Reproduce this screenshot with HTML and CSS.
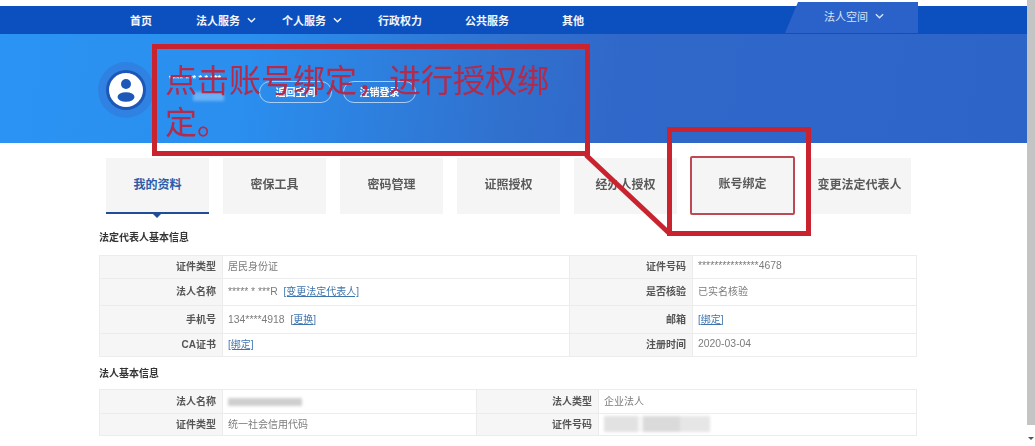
FILE: index.html
```html
<!DOCTYPE html>
<html lang="zh-CN">
<head>
<meta charset="utf-8">
<title>法人空间</title>
<link rel="stylesheet" href="styles.css">
</head>
<body>
<div class="page">
  <div class="main">
    <div class="top-strip"></div>
    <nav class="nav">
      <a class="nav-item nav-home">首页</a>
      <a class="nav-item nav-legal">法人服务<svg class="chev" viewBox="0 0 10 6"><path d="M1 1l4 4 4-4"/></svg></a>
      <a class="nav-item nav-person">个人服务<svg class="chev" viewBox="0 0 10 6"><path d="M1 1l4 4 4-4"/></svg></a>
      <a class="nav-item nav-admin">行政权力</a>
      <a class="nav-item nav-public">公共服务</a>
      <a class="nav-item nav-other">其他</a>
      <a class="nav-space">法人空间<svg class="chev" viewBox="0 0 10 6"><path d="M1 1l4 4 4-4"/></svg></a>
    </nav>
    <header class="hero">
      <svg class="avatar" viewBox="0 0 56 56">
        <circle cx="28" cy="28" r="28" fill="#2f82e2"/>
        <circle cx="28" cy="28" r="20" fill="#1d57b8"/>
        <circle cx="28" cy="28" r="17" fill="#fff"/>
        <circle cx="28" cy="22" r="5" fill="#1d57b8"/>
        <ellipse cx="28" cy="35" rx="8.5" ry="4.8" fill="#1d57b8"/>
      </svg>
      <div class="who">
        <div class="who-name">**** *** * * ***</div>
        <div class="who-blur"></div>
      </div>
      <a class="hero-btn">返回空间</a>
      <a class="hero-btn">注销登录</a>
    </header>
    <div class="tabs">
      <a class="tab tab-active">我的资料</a>
      <a class="tab">密保工具</a>
      <a class="tab">密码管理</a>
      <a class="tab">证照授权</a>
      <a class="tab">经办人授权</a>
      <a class="tab tab-marked">账号绑定</a>
      <a class="tab">变更法定代表人</a>
    </div>
    <section class="content">
      <h2 class="sec-title sec-first">法定代表人基本信息</h2>
      <table class="info info-a">
        <colgroup><col class="c-label"><col class="c-a2"><col class="c-a3"><col></colgroup>
        <tr class="h23"><th>证件类型</th><td>居民身份证</td><th>证件号码</th><td class="num">***************4678</td></tr>
        <tr class="h27"><th>法人名称</th><td><span class="num">***** * ***R</span> <a class="lnk">[变更法定代表人]</a></td><th>是否核验</th><td>已实名核验</td></tr>
        <tr class="h28"><th>手机号</th><td><span class="num">134****4918</span> <a class="lnk">[更换]</a></td><th>邮箱</th><td><a class="lnk">[绑定]</a></td></tr>
        <tr class="h23"><th>CA证书</th><td><a class="lnk">[绑定]</a></td><th>注册时间</th><td class="num">2020-03-04</td></tr>
      </table>
      <h2 class="sec-title sec-second">法人基本信息</h2>
      <table class="info info-b">
        <colgroup><col class="c-label"><col class="c-b2"><col class="c-b3"><col></colgroup>
        <tr class="h24"><th>法人名称</th><td><span class="smear smear-name"></span></td><th>法人类型</th><td>企业法人</td></tr>
        <tr class="h22"><th>证件类型</th><td>统一社会信用代码</td><th>证件号码</th><td><span class="smear smear-id"></span></td></tr>
      </table>
    </section>
  </div>
  <div class="scrollbar"><span class="scroll-track"></span><span class="scroll-arrow"></span></div>

  <div class="note">点击账号绑定，进行授权绑定。</div>
  <div class="mark-box"></div>
  <svg class="connector" viewBox="0 0 90 84"><path d="M2 2L86 81"/></svg>
</div>
</body>
</html>
```

FILE: styles.css
```css
* { box-sizing: border-box; }
html, body { margin: 0; padding: 0; background: #fff; }
body {
  width: 1035px;
  height: 446px;
  overflow: hidden;
  font-family: "Liberation Sans", "Noto Sans CJK SC", sans-serif;
}
.page {
  position: relative;
  display: flex;
  width: 1035px;
  height: 446px;
  overflow: hidden;
  filter: blur(0.45px);
}
.main { width: 1027px; flex: none; }
.top-strip { height: 6px; background: #fff; }

/* nav */
.nav {
  display: flex;
  align-items: center;
  height: 28px;
  background: #0c50bf;
  color: #f2f6fd;
  font-size: 11px;
  font-weight: 700;
  padding-left: 130px;
}
.nav-item { display: flex; align-items: center; white-space: nowrap; }
.nav-legal { margin-left: 44px; }
.nav-person { margin-left: 26px; }
.nav-admin { margin-left: 36px; }
.nav-public { margin-left: 43px; }
.nav-other { margin-left: 53px; }
.chev {
  width: 9px;
  height: 6px;
  margin-left: 7px;
  fill: none;
  stroke: currentColor;
  stroke-width: 1.6;
}
.nav-space {
  display: flex;
  align-items: center;
  align-self: flex-start;
  margin: -4px 0 0 201px;
  width: 133px;
  height: 31px;
  padding: 0 0 3px 39px;
  background: #2b62c9;
  color: #d5e2f8;
  font-weight: 400;
  clip-path: polygon(13px 0, 100% 0, 100% 100%, 0 100%);
}

/* hero */
.hero {
  display: flex;
  align-items: center;
  height: 109px;
  padding-left: 98px;
  background: linear-gradient(98deg, #2a93f3 0%, #2a8fef 24%, #3170cd 50%, #3068ca 60%, #2d64c8 100%);
}
.avatar { width: 56px; height: 56px; flex: none; margin-top: 2px; }
.who { width: 90px; margin: 0 0 0 15px; padding-bottom: 4px; }
.who-name {
  color: #fff;
  font-size: 9px;
  font-weight: 700;
  line-height: 10px;
  white-space: nowrap;
  filter: blur(0.5px);
}
.who-blur {
  width: 31px;
  height: 9px;
  margin: 9px 0 0 24px;
  background: #6ab2f5;
  filter: blur(1.5px);
}
.hero-btn {
  display: flex;
  align-items: center;
  justify-content: center;
  width: 73px;
  height: 22px;
  margin: 6px 11px 0 0;
  border: 1px solid #a9cdf5;
  border-radius: 11px;
  color: #fff;
  font-size: 10px;
  font-weight: 700;
}

/* tabs */
.tabs {
  display: flex;
  gap: 14px;
  margin-top: 15px;
  padding-left: 106px;
}
.tab {
  position: relative;
  display: flex;
  align-items: center;
  justify-content: center;
  flex: none;
  width: 103px;
  height: 56px;
  padding-bottom: 6px;
  background: #f5f5f5;
  color: #5a5a5a;
  font-size: 12px;
  font-weight: 700;
  white-space: nowrap;
}
.tab-active {
  color: #2a5caa;
  border-bottom: 2px solid #1f4e96;
  padding-bottom: 4px;
}
.tab-active::after {
  content: "";
  position: absolute;
  left: 47px;
  top: 100%;
  margin-top: 2px;
  border: 4px solid transparent;
  border-top-color: #1f4e96;
  border-bottom: 0;
}
.tab-marked {
  width: 105px;
  height: 59px;
  margin: -2px -1px -1px;
  border: 2px solid #bd4a52;
  border-radius: 2px;
}

/* content */
.content { padding: 0 110px 0 99px; }
.sec-title {
  margin: 0;
  color: #333;
  font-size: 10px;
  font-weight: 700;
  line-height: 14px;
}
.sec-first { padding-top: 17px; margin-bottom: 10px; }
.sec-second { padding-top: 10px; margin-bottom: 8px; }
.info {
  width: 818px;
  table-layout: fixed;
  border-collapse: collapse;
  font-size: 10px;
}
.c-label { width: 123px; }
.c-a2 { width: 347px; }
.c-a3 { width: 123px; }
.c-b2 { width: 254px; }
.c-b3 { width: 122px; }
.info th, .info td {
  padding: 0 0 3px;
  border: 1px solid #ececec;
  overflow: hidden;
  white-space: nowrap;
}
.info th {
  padding-right: 6px;
  background: #f6f6f6;
  color: #555;
  font-weight: 700;
  text-align: right;
}
.info td { padding-left: 5px; color: #7c7c7c; }
.num { font-size: 10.4px; }
.lnk { margin-left: 3px; color: #3e74ad; text-decoration: underline; }
td > .lnk:first-child { margin-left: 0; }
.h22 { height: 22px; }
.h23 { height: 23px; }
.h24 { height: 24px; }
.h27 { height: 27px; }
.h28 { height: 28px; }
.smear {
  display: block;
  background: #cfcfcf;
  filter: blur(1.6px);
}
.smear-name { width: 74px; height: 8px; margin-top: 3px; }
.smear-id {
  width: 106px;
  height: 16px;
  margin-top: 2px;
  background: linear-gradient(90deg, #e2e2e2 0 32%, #f6f6f6 32% 37%, #dadada 37% 72%, #e6e6e6 72% 100%);
}

/* scrollbar */
.scrollbar {
  flex: none;
  width: 8px;
  display: flex;
  flex-direction: column;
  align-items: center;
}
.scroll-track { display: block; flex: none; width: 8px; height: 425px; background: #c4c4c4; }
.scroll-arrow {
  margin-top: 12px;
  border: 3px solid transparent;
  border-top-color: #555;
  border-bottom: 0;
}

/* red annotations drawn over the page */
.note {
  position: absolute;
  left: 152px;
  top: 44px;
  width: 438px;
  height: 112px;
  padding: 8px 30px 0 8px;
  border: 5px solid #c9232f;
  color: #b32a4a;
  font-family: "Noto Sans CJK SC", sans-serif;
  font-size: 32px;
  line-height: 42px;
}
.mark-box {
  position: absolute;
  left: 667px;
  top: 127px;
  width: 144px;
  height: 109px;
  border: 5px solid #c9232f;
}
.connector {
  position: absolute;
  left: 584px;
  top: 153px;
  width: 90px;
  height: 84px;
  fill: none;
  stroke: #c9232f;
  stroke-width: 5;
}
```
